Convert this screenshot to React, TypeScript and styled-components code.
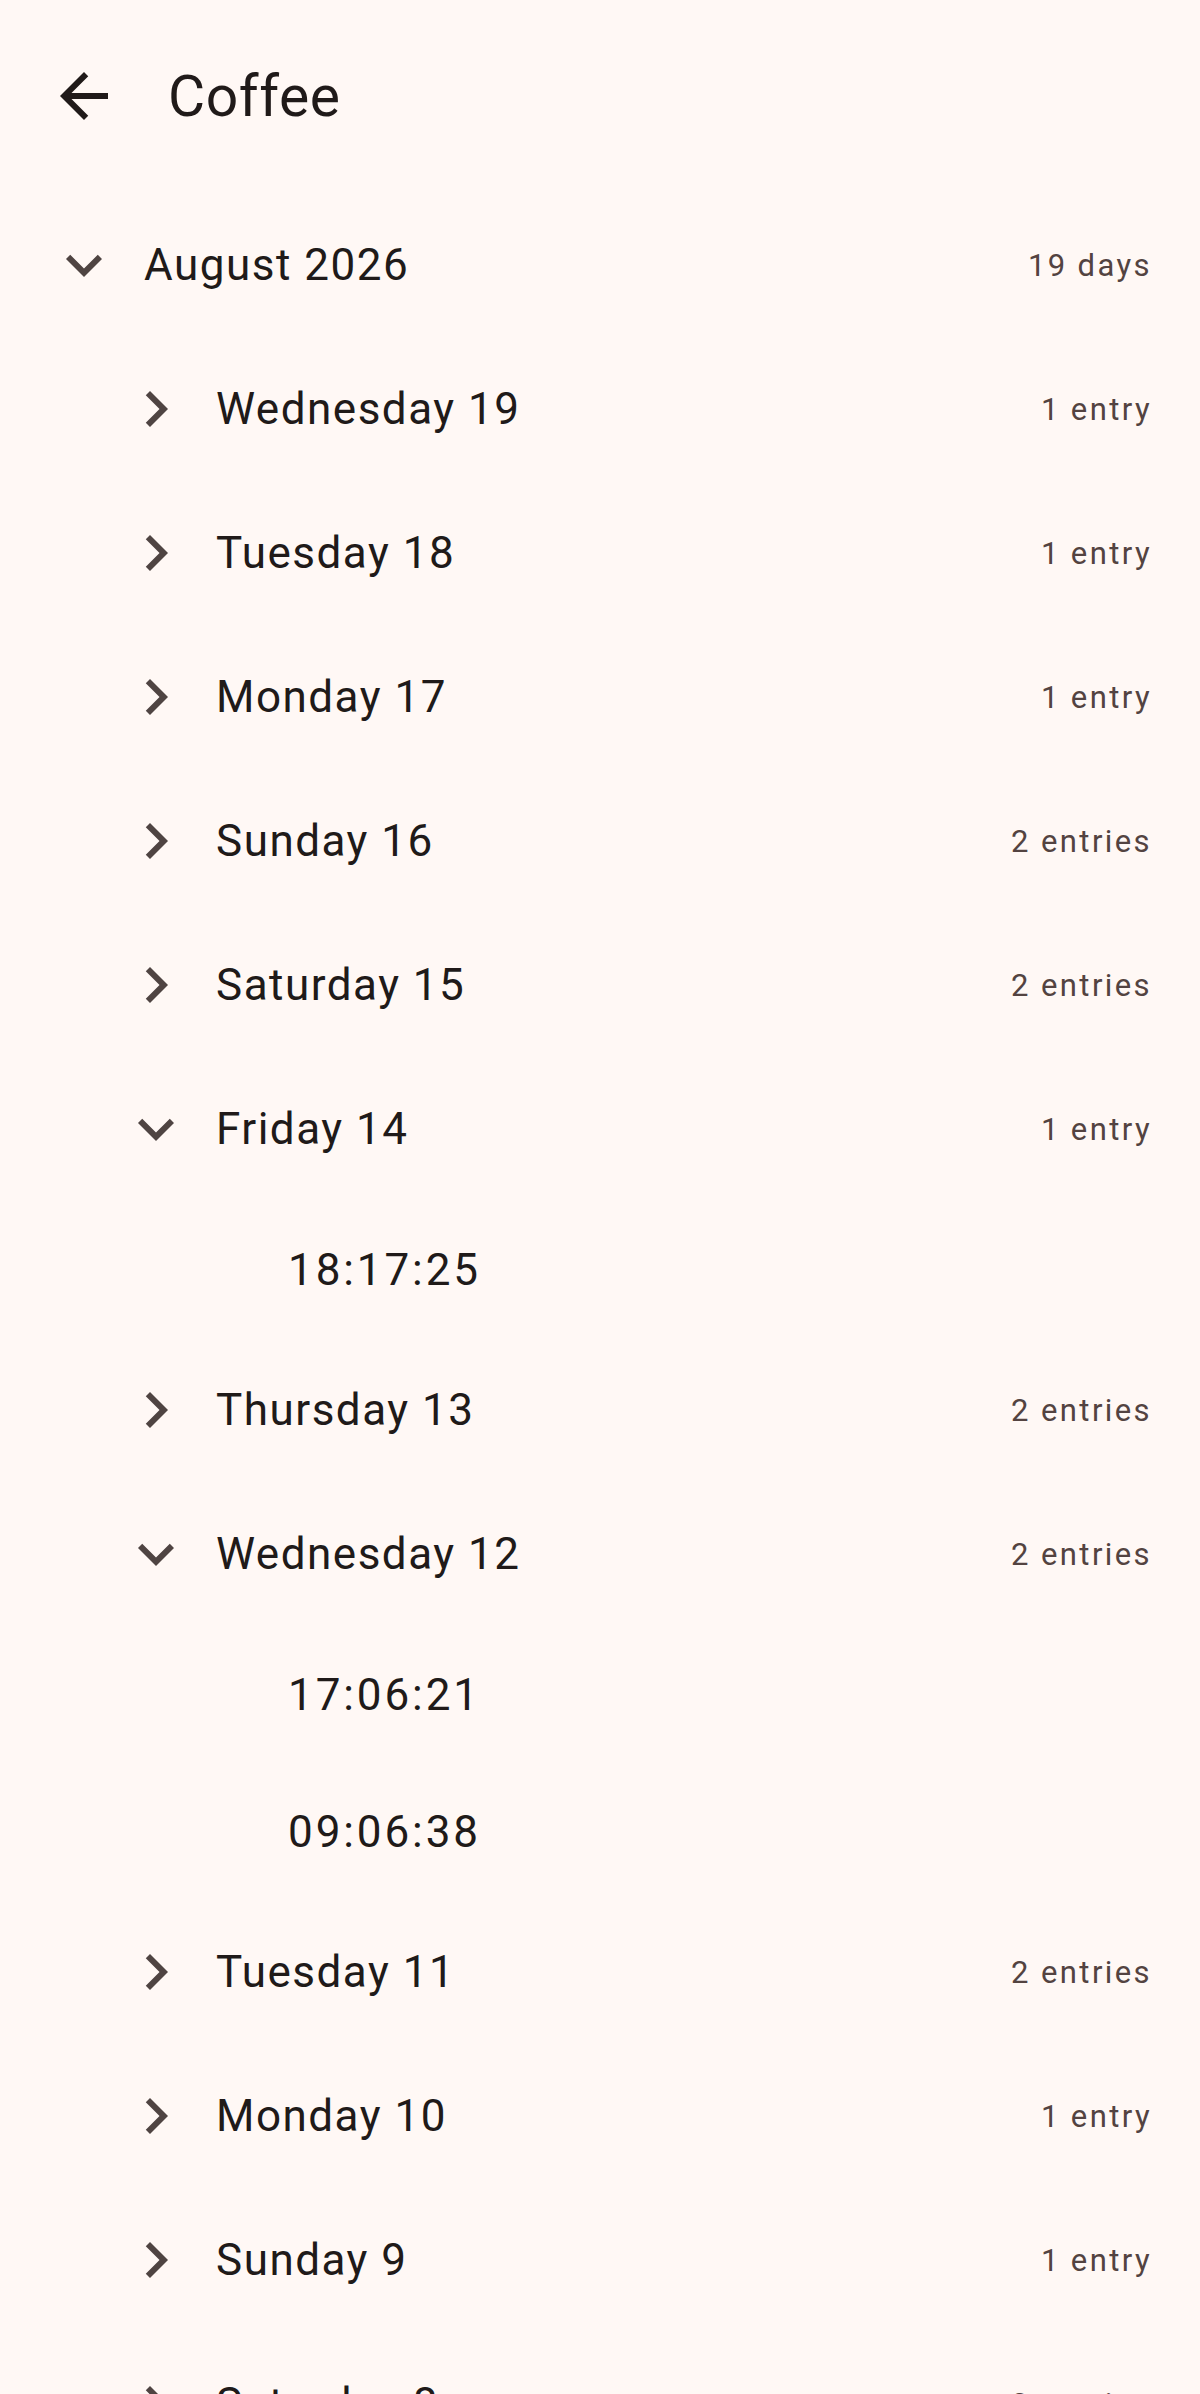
import styled, { createGlobalStyle } from "styled-components";

const GlobalStyle = createGlobalStyle`
  html, body {
    margin: 0;
    padding: 0;
    background: #fff8f5;
    font-family: Roboto, "Noto Sans", Arial, sans-serif;
    color: #201a19;
  }
`;

const Screen = styled.div`
  height: 100vh;
  overflow: hidden;
  background: #fff8f5;
`;

const TopBar = styled.header`
  display: flex;
  align-items: center;
  height: 192px;
  padding-left: 48px;
`;

const IconSlot = styled.div<{ $tone?: string }>`
  width: 72px;
  height: 72px;
  flex: none;
  display: flex;
  align-items: center;
  justify-content: center;
  color: ${(p) => p.$tone || "#4f4442"};

  svg {
    width: 72px;
    height: 72px;
    fill: currentColor;
  }
`;

const Title = styled.h1`
  margin: 0 0 0 48px;
  font-size: 57px;
  font-weight: 400;
  line-height: 1;
  letter-spacing: 0.6px;
  color: #201a19;
`;

const Tree = styled.div`
  display: flex;
  flex-direction: column;
  padding-top: 1px;
`;

const Row = styled.div<{ $level: number; $height: number }>`
  display: flex;
  align-items: center;
  height: ${(p) => p.$height}px;
  padding: 0 48px 0 ${(p) => 48 + p.$level * 72}px;
  flex: none;
`;

const Label = styled.span<{ $mono?: boolean }>`
  flex: 1;
  margin-left: 24px;
  font-size: 44px;
  line-height: 1;
  letter-spacing: ${(p) => (p.$mono ? "2.9px" : "1.5px")};
  color: #201a19;
  white-space: nowrap;
`;

const Count = styled.span`
  font-size: 31px;
  line-height: 1;
  letter-spacing: 2.4px;
  color: #534341;
  white-space: nowrap;
`;

const BackArrow = () => (
  <svg viewBox="0 0 24 24">
    <path d="M20 11H7.83l5.59-5.59L12 4l-8 8 8 8 1.41-1.41L7.83 13H20v-2z" />
  </svg>
);

const Chevron = ({ open }: { open: boolean }) => (
  <svg viewBox="0 0 24 24">
    {open ? (
      <path d="M16.59 8.59L12 13.17 7.41 8.59 6 10l6 6 6-6z" />
    ) : (
      <path d="M10 6L8.59 7.41 13.17 12l-4.58 4.59L10 18l6-6z" />
    )}
  </svg>
);

type Day = { name: string; count: number; open?: boolean; times?: string[] };

const days: Day[] = [
  { name: "Wednesday 19", count: 1 },
  { name: "Tuesday 18", count: 1 },
  { name: "Monday 17", count: 1 },
  { name: "Sunday 16", count: 2 },
  { name: "Saturday 15", count: 2 },
  { name: "Friday 14", count: 1, open: true, times: ["18:17:25"] },
  { name: "Thursday 13", count: 2 },
  { name: "Wednesday 12", count: 2, open: true, times: ["17:06:21", "09:06:38"] },
  { name: "Tuesday 11", count: 2 },
  { name: "Monday 10", count: 1 },
  { name: "Sunday 9", count: 1 },
  { name: "Saturday 8", count: 2 },
  { name: "Friday 7", count: 1 },
];

const entries = (n: number) => (n === 1 ? "1 entry" : `${n} entries`);

const App = () => {
  return (
    <>
      <GlobalStyle />
      <Screen>
        <TopBar>
          <IconSlot $tone="#201a19">
            <BackArrow />
          </IconSlot>
          <Title>Coffee</Title>
        </TopBar>

        <Tree>
          <Row $level={0} $height={144}>
            <IconSlot>
              <Chevron open />
            </IconSlot>
            <Label>August 2026</Label>
            <Count>19 days</Count>
          </Row>

          {days.map((d) => (
            <div key={d.name}>
              <Row $level={1} $height={144}>
                <IconSlot>
                  <Chevron open={!!d.open} />
                </IconSlot>
                <Label>{d.name}</Label>
                <Count>{entries(d.count)}</Count>
              </Row>
              {d.open &&
                d.times?.map((t) => (
                  <Row key={t} $level={2} $height={137}>
                    <IconSlot />
                    <Label $mono>{t}</Label>
                  </Row>
                ))}
            </div>
          ))}
        </Tree>
      </Screen>
    </>
  );
};

export default App;
